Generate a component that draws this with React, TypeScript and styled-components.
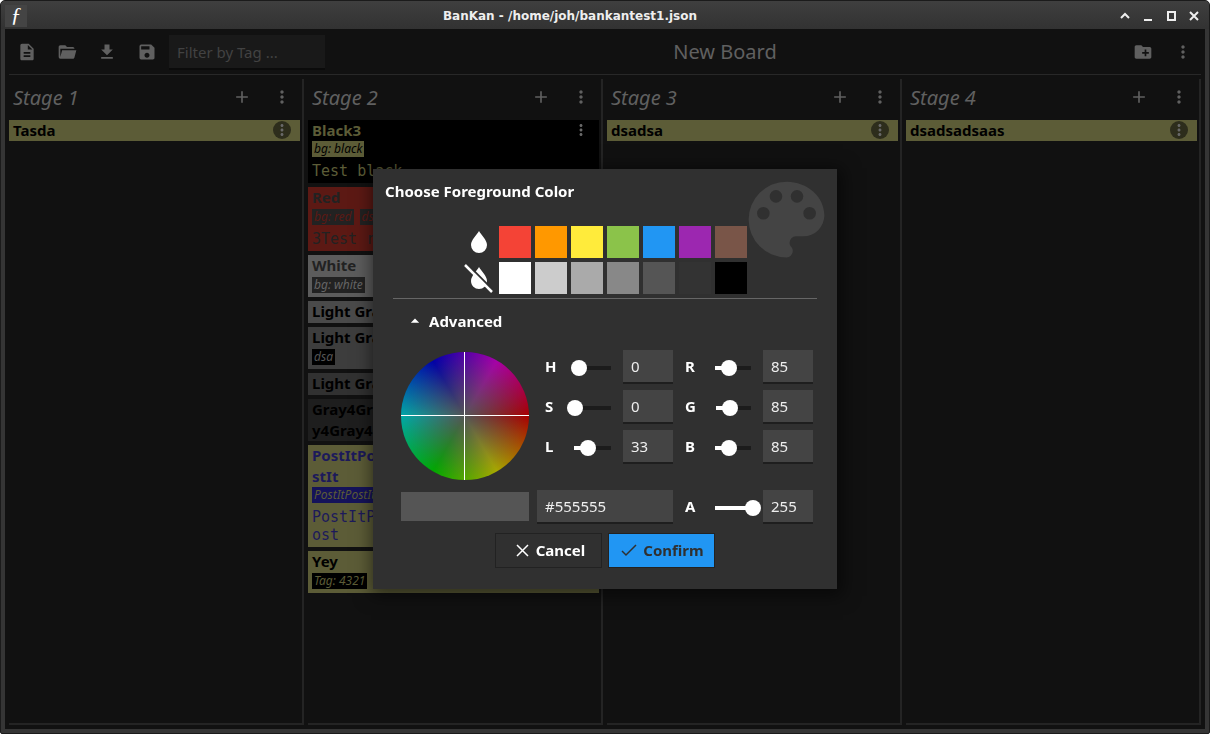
import React, { useState } from "react";
import styled, { createGlobalStyle, css } from "styled-components";
import {
  MdDescription,
  MdSave,
  MdMoreVert,
  MdAdd,
  MdDownload,
  MdCreateNewFolder,
  MdArrowDropUp,
} from "react-icons/md";

const Global = createGlobalStyle`
  *, *::before, *::after { box-sizing: border-box; }
  body { margin: 0; background: #fff; font-family: "Noto Sans", sans-serif; font-size: 15px; }
  h1, h2, h3, p, ul { margin: 0; padding: 0; font-weight: inherit; font-size: inherit; }
  ul { list-style: none; }
  button, input { font: inherit; color: inherit; }
`;

const Window = styled.div`
  display: flex;
  flex-direction: column;
  height: 100vh;
  padding: 0 4px 4px;
  border: 1px solid #1b1b1b;
  border-radius: 5px 5px 2px 2px;
  background: #353535;
  overflow: hidden;
`;

const TitleBar = styled.header`
  display: flex;
  align-items: center;
  flex: none;
  height: 28px;
  margin: 0 -4px;
  padding: 2px 4px 0;
  background: linear-gradient(#3f3f3f, #323232);
`;

const AppBadge = styled.span`
  width: 22px;
  height: 22px;
  background: #444;
  color: #fff;
  font: italic 22px/20px "Liberation Serif", serif;
  text-align: center;
`;

const WindowTitle = styled.h1`
  flex: 1;
  text-align: center;
  color: #eee;
  font: bold 12px/26px "DejaVu Sans", sans-serif;
`;

const WindowButton = styled.button`
  display: flex;
  align-items: center;
  justify-content: center;
  width: 23px;
  height: 26px;
  padding: 0;
  border: 0;
  background: none;
  color: #eee;
`;

const Surface = styled.main`
  display: flex;
  flex-direction: column;
  flex: 1;
  min-height: 0;
  padding: 4px;
  background: #111;
  color: #606060;
`;

const Toolbar = styled.div`
  display: flex;
  align-items: center;
  gap: 4px;
  flex: none;
  height: 42px;
  margin-bottom: 4px;
  padding-bottom: 4px;
  border-bottom: 1px solid #282828;
`;

const IconButton = styled.button`
  display: flex;
  align-items: center;
  justify-content: center;
  flex: none;
  width: 36px;
  height: 36px;
  padding: 0;
  border: 0;
  background: none;
  color: #606060;
`;

const FilterInput = styled.input`
  align-self: flex-end;
  width: 156px;
  height: 35px;
  padding: 0 8px;
  border: 0;
  border-bottom: 2px solid #0b0b0b;
  background: #191919;
  outline: none;
  &::placeholder { color: #424242; opacity: 1; }
`;

const BoardName = styled.h2`
  flex: 1;
  text-align: center;
  font-size: 20px;
  line-height: 28px;
`;

const Board = styled.div`
  display: grid;
  grid-template-columns: repeat(4, minmax(0, 1fr));
  gap: 4px;
  flex: 1;
  min-height: 0;
`;

const Stage = styled.section`
  padding-right: 2px;
  border: solid #242424;
  border-width: 0 2px 2px 0;
`;

const StageHeader = styled.header`
  display: flex;
  align-items: center;
  gap: 4px;
  height: 36px;
  margin-bottom: 5px;
  padding-left: 4px;
`;

const StageName = styled.h3`
  flex: 1;
  padding-top: 2px;
  font-size: 20px;
  line-height: 28px;
  font-style: italic;
`;

const CardList = styled.ul`
  display: flex;
  flex-direction: column;
  gap: 4px;
`;

const CardHead = styled.div`
  position: relative;
  min-height: 22px;
  padding: 0 41px 0 4px;
  font-weight: bold;
  line-height: 21px;
  word-break: break-all;
`;

const Card = styled.li<{ $bg: string; $fg: string }>`
  background: ${(p) => p.$bg};
  color: ${(p) => p.$fg};
  &:first-child ${CardHead} { min-height: 21px; }
`;

const CardMenu = styled.button<{ $round: boolean }>`
  position: absolute;
  top: 1px;
  right: 9px;
  display: flex;
  align-items: center;
  justify-content: center;
  width: 18px;
  height: 18px;
  padding: 0;
  border: 0;
  border-radius: 50%;
  background: ${(p) => (p.$round ? "#2d2d1c" : "none")};
  color: #686868;
`;

const Tags = styled.div`
  display: flex;
  gap: 6px;
  padding: 0 4px 4px;
`;

const Tag = styled.span<{ $bg: string; $fg: string }>`
  padding: 0 2px;
  background: ${(p) => p.$bg};
  color: ${(p) => p.$fg};
  font-size: 12px;
  font-style: italic;
  line-height: 16px;
  white-space: nowrap;
`;

const CardText = styled.p`
  padding: 1px 4px 3px;
  font-family: "DejaVu Sans Mono", monospace;
  font-size: 15px;
  line-height: 18px;
  word-break: break-all;
`;

const Overlay = styled.div`
  position: fixed;
  inset: 29px 5px 5px;
  display: flex;
  align-items: center;
  justify-content: center;
`;

const Dialog = styled.section`
  position: relative;
  width: 464px;
  padding: 11px 24px 21px 28px;
  background: #303030;
  color: #fff;
  box-shadow: 2px 3px 16px 4px rgba(0, 0, 0, 0.5);
`;

const DialogTitle = styled.h2`
  margin: 0 0 24px -16px;
  font-weight: bold;
  line-height: 22px;
`;

const PaletteMark = styled.svg`
  position: absolute;
  top: 0;
  right: 0;
  fill: #444;
`;

const SwatchGrid = styled.div`
  display: grid;
  grid-template-columns: repeat(8, 32px);
  grid-auto-rows: 32px;
  gap: 4px;
  justify-content: center;
  margin-left: -4px;
`;

const Swatch = styled.button<{ $color: string }>`
  padding: 0;
  border: 0;
  background: ${(p) => p.$color};
`;

const Divider = styled.hr`
  height: 1px;
  margin: 4px -4px 11px -8px;
  border: 0;
  background: #666;
`;

const AdvancedToggle = styled.button`
  display: flex;
  align-items: center;
  gap: 4px;
  height: 22px;
  margin-bottom: 18px;
  padding: 0 4px;
  border: 0;
  background: none;
  font-weight: bold;
`;

const Picker = styled.div`
  display: grid;
  grid-template-columns: 132px 136px 136px;
  gap: 10px 4px;
`;

const Wheel = styled.div`
  position: relative;
  width: 128px;
  height: 128px;
  margin-top: 2px;
  border-radius: 50%;
  background: radial-gradient(circle closest-side, #555, rgba(85, 85, 85, 0)),
    conic-gradient(from 90deg, #a80000, #a8a800, #00a800, #00a8a8, #0000a8, #a800a8, #a80000);
  &::before, &::after {
    content: "";
    position: absolute;
    background: #fff;
  }
  &::before { left: 63px; top: 0; width: 1px; height: 128px; }
  &::after { left: 0; top: 63px; width: 128px; height: 1px; }
`;

const Channels = styled.div`
  display: flex;
  flex-direction: column;
  gap: 6px;
`;

const ChannelRow = styled.div`
  display: grid;
  grid-template-columns: 22px 56px 50px;
  align-items: center;
  padding-left: 8px;
`;

const ChannelLabel = styled.label`
  padding-bottom: 2px;
  font-weight: bold;
  line-height: 18px;
`;

const Slider = styled.input<{ $from: number; $fill: number }>`
  appearance: none;
  width: 54px;
  height: 18px;
  margin: 2px 0 0;
  background: none;
  &::-webkit-slider-runnable-track {
    height: 4px;
    background: linear-gradient(
      to right,
      transparent ${(p) => p.$from}px,
      #fff ${(p) => p.$from}px ${(p) => p.$fill}px,
      #1c1c1c ${(p) => p.$fill}px 44px,
      transparent 44px
    );
  }
  &::-webkit-slider-thumb {
    appearance: none;
    width: 16px;
    height: 16px;
    margin-top: -6px;
    border-radius: 50%;
    background: #fff;
  }
`;

const field = css`
  width: 100%;
  min-width: 0;
  height: 34px;
  padding: 0 8px;
  border: 0;
  border-bottom: 2px solid #1e1e1e;
  background: #444;
  color: #eee;
  outline: none;
`;

const Field = styled.input`${field}`;

const Preview = styled.div`
  width: 128px;
  height: 29px;
  margin-top: 2px;
  background: #555;
`;

const Actions = styled.div`
  display: flex;
  justify-content: center;
  gap: 6px;
  margin: 9px 0 0 -4px;
`;

const ActionButton = styled.button<{ $primary?: boolean }>`
  display: flex;
  align-items: center;
  justify-content: center;
  gap: 4px;
  width: 107px;
  height: 35px;
  padding: 0 0 2px;
  border: 1px solid #222;
  background: ${(p) => (p.$primary ? "#2196f3" : "#303030")};
  color: ${(p) => (p.$primary ? "#303030" : "#fff")};
  font-weight: bold;
`;

const OpenFolder = () => (
  <svg width="20" height="20" viewBox="0 0 24 24" fill="currentColor" aria-hidden="true">
    <path d="M19 20H4a2 2 0 0 1-2-2V6c0-1.110.89-2 2-2h6l2 2h7a2 2 0 0 1 2 2H4v10l2.140-8h17.070l-2.280 8.500c-.23.870-1.010 1.500-1.930 1.500z" />
  </svg>
);

const Drop = ({ off = false }: { off?: boolean }) => (
  <svg width="32" height="32" viewBox="0 0 32 32" aria-hidden="true">
    <path d="M16 5c2 3.500 8 9 8 14a8 8 0 0 1-16 0c0-5 6-10.500 8-14z" fill="#fff" />
    {off && (
      <>
        <path d="M4 2L30 28" stroke="#303030" strokeWidth="2" />
        <path d="M2 3L29 30" stroke="#fff" strokeWidth="2.500" />
      </>
    )}
  </svg>
);

type TagData = { text: string; bg: string; fg: string };
type CardData = { title: string; bg: string; fg: string; tags?: TagData[]; text?: string; menu?: "plain" | "round" };

const khaki = "#5c5c37";
const red = "#5c1914";

const stages: { name: string; cards: CardData[] }[] = [
  { name: "Stage 1", cards: [{ title: "Tasda", bg: khaki, fg: "#000", menu: "round" }] },
  {
    name: "Stage 2",
    cards: [
      { title: "Black3", bg: "#000", fg: khaki, tags: [{ text: "bg: black", bg: khaki, fg: "#000" }], text: "Test black", menu: "plain" },
      {
        title: "Red", bg: red, fg: "#222",
        tags: [{ text: "bg: red", bg: "#222", fg: red }, { text: "dsa", bg: "#222", fg: red }],
        text: "3Test red",
      },
      { title: "White", bg: "#5c5c5c", fg: "#222", tags: [{ text: "bg: white", bg: "#222", fg: "#666" }] },
      { title: "Light Gray", bg: "#4a4a4a", fg: "#000" },
      { title: "Light Gray3", bg: "#3d3d3d", fg: "#000", tags: [{ text: "dsa", bg: "#000", fg: "#555" }] },
      { title: "Light Gray4", bg: "#313131", fg: "#000" },
      { title: "Gray4Gray4Gray4Gray4Gray4Gray4Gray4Gray4", bg: "#1e1e1e", fg: "#000" },
      {
        title: "PostItPostItPostItPostItPostItPostIt", bg: khaki, fg: "#1c1a5a",
        tags: [{ text: "PostItPostIt", bg: "#15135a", fg: khaki }],
        text: "PostItPostItPostItPostItPostItPost",
      },
      { title: "Yey", bg: khaki, fg: "#000", tags: [{ text: "Tag: 4321", bg: "#000", fg: khaki }] },
    ],
  },
  { name: "Stage 3", cards: [{ title: "dsadsa", bg: khaki, fg: "#000", menu: "round" }] },
  { name: "Stage 4", cards: [{ title: "dsadsadsaas", bg: khaki, fg: "#000", menu: "round" }] },
];

const brights = ["#f44336", "#ff9800", "#ffeb3b", "#8bc34a", "#2196f3", "#9c27b0", "#795548"];
const grays = ["#ffffff", "#cccccc", "#aaaaaa", "#888888", "#555555", "#333333", "#000000"];

type ChannelProps = { name: string; value: number; level: number; from?: number };

const Channel = ({ name, value, level, from = 8 }: ChannelProps) => {
  const [position, setPosition] = useState(level);
  return (
    <ChannelRow>
      <ChannelLabel htmlFor={`value-${name}`}>{name}</ChannelLabel>
      <Slider
        type="range"
        min={0}
        max={38}
        value={position}
        onChange={(e) => setPosition(Number(e.target.value))}
        aria-label={`${name} slider`}
        $from={from}
        $fill={8 + position}
      />
      <Field id={`value-${name}`} defaultValue={value} />
    </ChannelRow>
  );
};

export default function App() {
  return (
    <>
      <Global />
      <Window>
        <TitleBar>
          <AppBadge aria-hidden="true">ƒ</AppBadge>
          <WindowTitle>BanKan - /home/joh/bankantest1.json</WindowTitle>
          <WindowButton aria-label="Shade">
            <svg width="10" height="10" viewBox="0 0 10 10"><path d="M1 7l4-4 4 4" fill="none" stroke="currentColor" strokeWidth="2" /></svg>
          </WindowButton>
          <WindowButton aria-label="Minimize">
            <svg width="10" height="10" viewBox="0 0 10 10"><path d="M1 8h8v2H1z" fill="currentColor" /></svg>
          </WindowButton>
          <WindowButton aria-label="Maximize">
            <svg width="10" height="10" viewBox="0 0 10 10"><path d="M2 1h7v8H2z" fill="none" stroke="currentColor" strokeWidth="2" /></svg>
          </WindowButton>
          <WindowButton aria-label="Close">
            <svg width="10" height="10" viewBox="0 0 10 10"><path d="M1 1l8 8M9 1L1 9" stroke="currentColor" strokeWidth="2" /></svg>
          </WindowButton>
        </TitleBar>
        <Surface>
          <Toolbar>
            <IconButton aria-label="New board"><MdDescription size={20} /></IconButton>
            <IconButton aria-label="Open"><OpenFolder /></IconButton>
            <IconButton aria-label="Save as"><MdDownload size={20} /></IconButton>
            <IconButton aria-label="Save"><MdSave size={20} /></IconButton>
            <FilterInput placeholder="Filter by Tag ..." aria-label="Filter by tag" />
            <BoardName>New Board</BoardName>
            <IconButton aria-label="Add stage"><MdCreateNewFolder size={20} /></IconButton>
            <IconButton aria-label="Board menu"><MdMoreVert size={20} /></IconButton>
          </Toolbar>
          <Board>
            {stages.map((stage) => (
              <Stage key={stage.name}>
                <StageHeader>
                  <StageName>{stage.name}</StageName>
                  <IconButton aria-label="Add card"><MdAdd size={20} /></IconButton>
                  <IconButton aria-label="Stage menu"><MdMoreVert size={20} /></IconButton>
                </StageHeader>
                <CardList>
                  {stage.cards.map((card) => (
                    <Card key={card.title} $bg={card.bg} $fg={card.fg}>
                      <CardHead>
                        {card.title}
                        {card.menu && (
                          <CardMenu $round={card.menu === "round"} aria-label="Card menu">
                            <MdMoreVert size={20} />
                          </CardMenu>
                        )}
                      </CardHead>
                      {card.tags && (
                        <Tags>
                          {card.tags.map((tag) => (
                            <Tag key={tag.text} $bg={tag.bg} $fg={tag.fg}>{tag.text}</Tag>
                          ))}
                        </Tags>
                      )}
                      {card.text && <CardText>{card.text}</CardText>}
                    </Card>
                  ))}
                </CardList>
              </Stage>
            ))}
          </Board>
        </Surface>
      </Window>
      <Overlay>
        <Dialog role="dialog" aria-labelledby="dialog-title">
          <PaletteMark width="101" height="101" viewBox="0 0 24 24" aria-hidden="true">
            <path d="M17.500 12A1.500 1.500 0 0 1 16 10.500A1.500 1.500 0 0 1 17.500 9A1.500 1.500 0 0 1 19 10.500A1.500 1.500 0 0 1 17.500 12M14.500 8A1.500 1.500 0 0 1 13 6.500A1.500 1.500 0 0 1 14.500 5A1.500 1.500 0 0 1 16 6.500A1.500 1.500 0 0 1 14.500 8M9.500 8A1.500 1.500 0 0 1 8 6.500A1.500 1.500 0 0 1 9.500 5A1.500 1.500 0 0 1 11 6.500A1.500 1.500 0 0 1 9.500 8M6.500 12A1.500 1.500 0 0 1 5 10.500A1.500 1.500 0 0 1 6.500 9A1.500 1.500 0 0 1 8 10.500A1.500 1.500 0 0 1 6.500 12M12 3A9 9 0 0 0 3 12A9 9 0 0 0 12 21A1.500 1.500 0 0 0 13.500 19.500C13.500 19.110 13.350 18.760 13.110 18.500C12.880 18.230 12.730 17.880 12.730 17.500A1.500 1.500 0 0 1 14.230 16H16A5 5 0 0 0 21 11C21 6.580 16.970 3 12 3Z" />
          </PaletteMark>
          <DialogTitle id="dialog-title">Choose Foreground Color</DialogTitle>
          <SwatchGrid>
            <Drop />
            {brights.map((c) => <Swatch key={c} $color={c} aria-label={c} />)}
            <Drop off />
            {grays.map((c) => <Swatch key={c} $color={c} aria-label={c} />)}
          </SwatchGrid>
          <Divider />
          <AdvancedToggle aria-expanded="true">
            <MdArrowDropUp size={20} />
            Advanced
          </AdvancedToggle>
          <Picker>
            <Wheel />
            <Channels>
              <Channel name="H" value={0} level={4} from={12} />
              <Channel name="S" value={0} level={0} />
              <Channel name="L" value={33} level={13} from={7} />
            </Channels>
            <Channels>
              <Channel name="R" value={85} level={14} />
              <Channel name="G" value={85} level={15} from={9} />
              <Channel name="B" value={85} level={14} />
            </Channels>
            <Preview />
            <Field defaultValue="#555555" aria-label="Hex color" />
            <Channel name="A" value={255} level={38} />
          </Picker>
          <Actions>
            <ActionButton>
              <svg width="20" height="20" viewBox="0 0 20 20"><path d="M5 5l11 11M16 5L5 16" stroke="currentColor" strokeWidth="1.500" /></svg>
              Cancel
            </ActionButton>
            <ActionButton $primary>
              <svg width="20" height="20" viewBox="0 0 20 20"><path d="M3 11l4 4L17 5" fill="none" stroke="currentColor" strokeWidth="1.500" /></svg>
              Confirm
            </ActionButton>
          </Actions>
        </Dialog>
      </Overlay>
    </>
  );
}
